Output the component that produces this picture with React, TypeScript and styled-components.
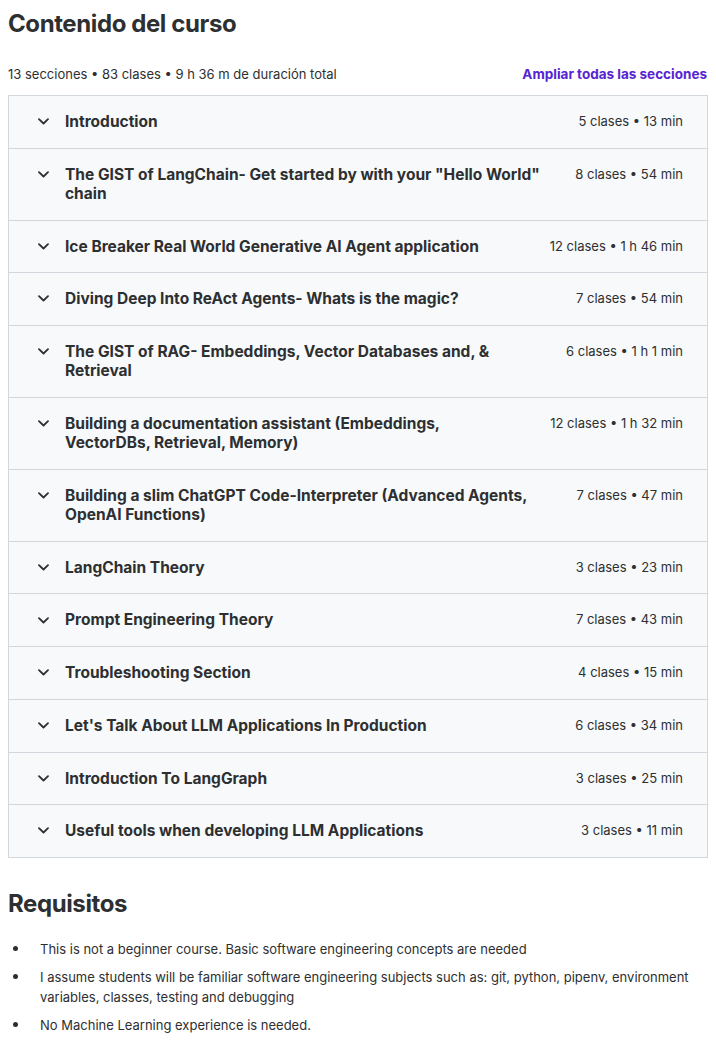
import React from "react";
import styled, { createGlobalStyle } from "styled-components";

const Global = createGlobalStyle`
  body {
    margin: 8px;
    background: #ffffff;
    color: #2d2f31;
    font-family: Inter, "Noto Sans", sans-serif;
  }
  * { box-sizing: border-box; }
`;

const Page = styled.div`
  width: 700px;
`;

const Heading = styled.h2`
  margin: 0;
  font-size: 24px;
  line-height: 32px;
  font-weight: 700;
  letter-spacing: -0.4px;
`;

const SubHeader = styled.div`
  display: flex;
  justify-content: space-between;
  align-items: center;
  margin-top: 24px;
  margin-bottom: 11px;
  font-size: 13px;
  line-height: 20px;
`;

const Stats = styled.span`
  color: #2d2f31;
`;

const ExpandLink = styled.button`
  border: none;
  background: none;
  padding: 0;
  margin-right: 1px;
  font: inherit;
  font-size: 13.5px;
  font-weight: 700;
  color: #5624d0;
  cursor: pointer;
`;

const Panel = styled.div`
  border: 1px solid #d1d7dc;
  border-bottom: none;
`;

const Row = styled.div`
  display: flex;
  align-items: flex-start;
  gap: 14px;
  padding: 16px 24px 16.5px 26px;
  background: #f7f9fa;
  border-bottom: 1px solid #d1d7dc;
`;

const Chevron = styled.span`
  flex: 0 0 16px;
  height: 19.2px;
  display: flex;
  align-items: center;
  justify-content: center;
`;

const Title = styled.span`
  flex: 1;
  font-size: 15.5px;
  font-weight: 700;
  line-height: 19.2px;
  padding-right: 14px;
`;

const Meta = styled.span`
  flex: 0 0 auto;
  font-size: 13px;
  line-height: 19.2px;
  color: #2d2f31;
`;

const Requirements = styled.section`
  margin-top: 30px;
`;

const List = styled.ul`
  list-style: none;
  margin: 19px 0 0 0;
  padding: 0;
  display: flex;
  flex-direction: column;
  gap: 8px;
`;

const Item = styled.li`
  display: flex;
  font-size: 13px;
  line-height: 20px;
`;

const Bullet = styled.span`
  flex: 0 0 32px;
  height: 20px;
  display: flex;
  align-items: center;
  padding-left: 5px;
  &::before {
    content: "";
    width: 5px;
    height: 5px;
    border-radius: 50%;
    background: #2d2f31;
  }
`;

const ChevronIcon = () => (
  <svg width="11" height="7" viewBox="0 0 11 7" fill="none">
    <path d="M1 1.2 L5.5 5.5 L10 1.2" stroke="#2d2f31" strokeWidth="1.8" strokeLinecap="round" strokeLinejoin="round" />
  </svg>
);

const sections: [string, string][] = [
  ["Introduction", "5 clases • 13 min"],
  ["The GIST of LangChain- Get started by with your \"Hello World\" chain", "8 clases • 54 min"],
  ["Ice Breaker Real World Generative AI Agent application", "12 clases • 1 h 46 min"],
  ["Diving Deep Into ReAct Agents- Whats is the magic?", "7 clases • 54 min"],
  ["The GIST of RAG- Embeddings, Vector Databases and, & Retrieval", "6 clases • 1 h 1 min"],
  ["Building a documentation assistant (Embeddings, VectorDBs, Retrieval, Memory)", "12 clases • 1 h 32 min"],
  ["Building a slim ChatGPT Code-Interpreter (Advanced Agents, OpenAI Functions)", "7 clases • 47 min"],
  ["LangChain Theory", "3 clases • 23 min"],
  ["Prompt Engineering Theory", "7 clases • 43 min"],
  ["Troubleshooting Section", "4 clases • 15 min"],
  ["Let's Talk About LLM Applications In Production", "6 clases • 34 min"],
  ["Introduction To LangGraph", "3 clases • 25 min"],
  ["Useful tools when developing LLM Applications", "3 clases • 11 min"],
];

const reqs = [
  "This is not a beginner course. Basic software engineering concepts are needed",
  "I assume students will be familiar software engineering subjects such as: git, python, pipenv, environment variables, classes, testing and debugging",
  "No Machine Learning experience is needed.",
];

export default function App() {
  return (
    <Page>
      <Global />
      <Heading>Contenido del curso</Heading>
      <SubHeader>
        <Stats>13 secciones • 83 clases • 9 h 36 m de duración total</Stats>
        <ExpandLink>Ampliar todas las secciones</ExpandLink>
      </SubHeader>
      <Panel>
        {sections.map(([t, m]) => (
          <Row key={t}>
            <Chevron><ChevronIcon /></Chevron>
            <Title>{t}</Title>
            <Meta>{m}</Meta>
          </Row>
        ))}
      </Panel>
      <Requirements>
        <Heading>Requisitos</Heading>
        <List>
          {reqs.map((r) => (
            <Item key={r}>
              <Bullet />
              <span>{r}</span>
            </Item>
          ))}
        </List>
      </Requirements>
    </Page>
  );
}
